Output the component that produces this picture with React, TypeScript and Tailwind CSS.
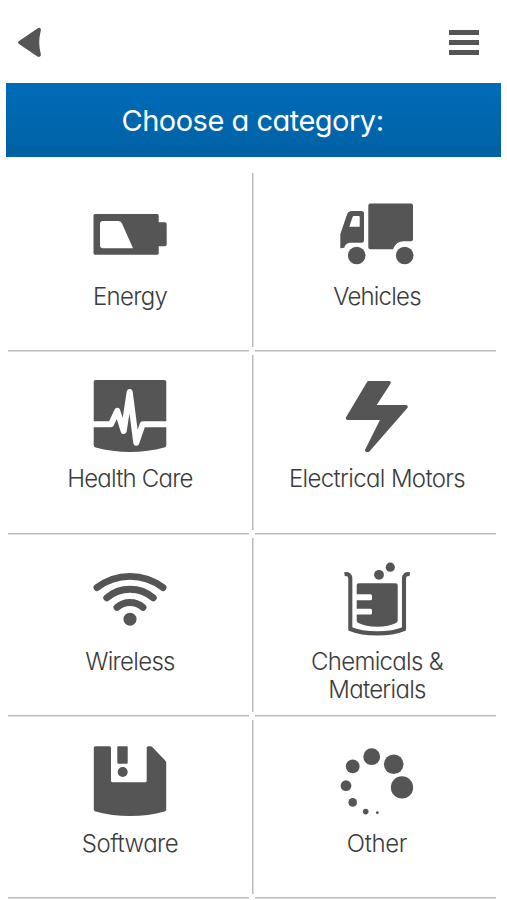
import type { ReactNode } from "react";

type Category = {
  label: ReactNode;
  spacing: string;
  icon: ReactNode;
};

const energy = (
  <path
    fillRule="evenodd"
    d="M5 20H67.2Q68.7 20 68.7 21.5V28.3H74.7Q76.7 28.3 76.7 30.3V50.3Q76.7 52.3 74.7 52.3H68.7V59.2Q68.7 60.7 67.2 60.7H5Q3.5 60.7 3.5 59.2V21.5Q3.5 20 5 20ZM13 27Q10 27 10 30V51.3Q10 54.3 13 54.3H43L32 29.5Q31 27 28.5 27Z"
  />
);

const vehicles = (
  <>
    <path d="M33.3 9.6H74Q76 9.6 76 11.6V45.5Q76 47.3 74 47.3H67C61 47.3 58.5 50 56 55.3H33.3Q31.3 55.3 31.3 53.3V11.6Q31.3 9.6 33.3 9.6Z" />
    <path
      fillRule="evenodd"
      d="M3.3 54.3V40.3L9.8 21Q11 17 15 17H24.5Q27 17 27 19.5V46.5Q27 48.7 24.8 48.7H14C10 48.7 8 51 7.3 53.7ZM17 22Q16 22 15.6 23L12.3 32.7H22.7V23Q22.7 22 21.7 22Z"
    />
    <circle cx="19.7" cy="61.5" r="8.8" />
    <circle cx="67.7" cy="61.5" r="8.8" />
  </>
);

const health = (
  <>
    <path d="M5.7 4H74.3Q76.3 4 76.3 6V69Q76.3 71 74.3 71.6Q58 76 40 76Q22 76 5.7 71.6Q3.7 71 3.7 69V6Q3.7 4 5.7 4Z" />
    <path
      d="M3 48.3H21L27.3 34.8L33.7 55L39.7 16L46.3 66.8L52.7 48.3H77"
      fill="none"
      stroke="#fff"
      strokeWidth="6"
      strokeLinejoin="round"
    />
  </>
);

const motors = (
  <path
    d="M31.6 6.8H52L36.4 30.8H69L31 74.2H29.8L45.8 42.2H10.6Z"
    stroke="#555"
    strokeWidth="3.6"
    strokeLinejoin="round"
  />
);

const wireless = (
  <>
    <g fill="none" stroke="#555" strokeWidth="6.9" strokeLinecap="round">
      <path d="M7 28.6A54 54 0 0 1 73 28.6" />
      <path d="M16.7 38.8A35.8 35.8 0 0 1 63.3 38.8" />
      <path d="M27 48.4A19.5 19.5 0 0 1 53 48.4" />
    </g>
    <circle cx="40" cy="60.2" r="6.5" />
  </>
);

const chemicals = (
  <>
    <path
      d="M7.5 15.2Q13.3 14.3 13.3 20V70Q24 74.4 40.2 74.4T67 70V20Q67 14.3 72.8 15.2"
      fill="none"
      stroke="#555"
      strokeWidth="4.1"
    />
    <path d="M21.7 24.2H58.7Q60.7 24.2 60.7 26.2V61.5Q60.7 63 59 64Q52 67.7 40.2 67.7T21.4 64Q19.7 63 19.7 61.5V55.5H33.5Q35 55.5 35 54V51.3Q35 49.8 33.5 49.8H19.7V41.2H33.5Q35 41.2 35 39.7V36.7Q35 35.2 33.5 35.2H19.7V26.2Q19.7 24.2 21.7 24.2Z" />
    <circle cx="42" cy="15.8" r="4.9" />
    <circle cx="53.3" cy="8.2" r="4.6" />
  </>
);

const software = (
  <>
    <path d="M5.5 5.3H19.5Q21 5.3 21 6.8V39.8Q21 41.3 22.5 41.3H55.2Q56.7 41.3 56.7 39.8V6.8Q56.7 5.3 58.2 5.3H60.5Q61.7 5.3 62.5 6.2L75.2 19.6Q76.2 20.5 76.2 21.7V68.5Q76.2 70 74.7 70.4Q58 74.9 40 74.9T5.5 70.4Q3.8 70 3.8 68.5V6.8Q3.8 5.3 5.5 5.3Z" />
    <rect x="27.3" y="5.3" width="10.4" height="17.4" rx="1" />
    <circle cx="32.7" cy="31" r="5" />
  </>
);

const other = (
  <>
    <circle cx="34.7" cy="15.7" r="8.4" />
    <circle cx="56.7" cy="23.3" r="9.8" />
    <circle cx="65" cy="46.4" r="11.1" />
    <circle cx="15.7" cy="25.3" r="6.9" />
    <circle cx="9" cy="44.7" r="5.4" />
    <circle cx="15.7" cy="61.4" r="4.3" />
    <circle cx="28.7" cy="70.6" r="2.8" />
    <circle cx="40.3" cy="71.7" r="1.4" />
  </>
);

const rows: [Category, Category][] = [
  [
    { label: "Energy", spacing: "tracking-[-0.7px]", icon: energy },
    { label: "Vehicles", spacing: "tracking-[-0.8px]", icon: vehicles },
  ],
  [
    { label: "Health Care", spacing: "tracking-[-0.8px]", icon: health },
    { label: "Electrical Motors", spacing: "tracking-[-0.65px]", icon: motors },
  ],
  [
    { label: "Wireless", spacing: "tracking-[-0.7px]", icon: wireless },
    {
      label: (
        <>
          Chemicals &amp;
          <br />
          Materials
        </>
      ),
      spacing: "tracking-[-0.7px]",
      icon: chemicals,
    },
  ],
  [
    { label: "Software", spacing: "tracking-[-0.5px]", icon: software },
    { label: "Other", spacing: "tracking-[-0.35px]", icon: other },
  ],
];

function CategoryCell({ label, spacing, icon }: Category) {
  return (
    <button className="flex flex-col items-center border-b border-[#dedede]">
      <div className="flex w-full flex-1 flex-col items-center border-b border-[#bababa] pt-6 pl-[3px]">
        <svg viewBox="0 0 80 80" className="size-20 shrink-0" fill="#555">
          {icon}
        </svg>
        <span
          className={`mt-[9px] text-[24px] leading-[28.5px] font-light whitespace-nowrap text-[#3c3c3c] ${spacing}`}
        >
          {label}
        </span>
      </div>
    </button>
  );
}

export default function App() {
  return (
    <div className="h-[900px] w-[507px] overflow-hidden bg-white font-['Inter',sans-serif] [font-feature-settings:'cv11']">
      <header className="flex h-[82.5px] items-start justify-between pr-7 pl-[18px]">
        <button className="mt-[27px]">
          <svg viewBox="0 0 24 31" className="h-[31px] w-6" fill="#555">
            <path d="M.7 14.3L19.8 1.2Q22 .2 22.9 2.2Q23 3 22.6 4.5Q19.8 15.4 22.7 26.5Q23.3 28.8 22 29.6Q21 30.4 19.4 29.5L.7 16.7Q-.6 15.5 .7 14.3Z" />
          </svg>
        </button>
        <button className="mt-[30px] flex w-[30px] flex-col gap-[5px]">
          <span className="h-[5px] bg-[#555]" />
          <span className="h-[5px] bg-[#555]" />
          <span className="h-[5px] bg-[#555]" />
        </button>
      </header>
      <h1 className="mx-1.5 flex h-[74.5px] items-center justify-center bg-linear-to-b from-[#006cba] to-[#0061a3] pt-px pr-0.5 text-[29px] tracking-[-0.5px] text-white">
        Choose a category:
      </h1>
      <main className="mt-[13px] ml-2">
        {rows.map(([left, right], i) => (
          <div key={i} className="grid h-[182.3px] grid-cols-[241px_6px_241px]">
            <CategoryCell {...left} />
            <div className="mt-[3px] mb-[5px] ml-[3px] w-0.5 border-r border-[#dedede] bg-[#bababa]" />
            <CategoryCell {...right} />
          </div>
        ))}
      </main>
    </div>
  );
}
